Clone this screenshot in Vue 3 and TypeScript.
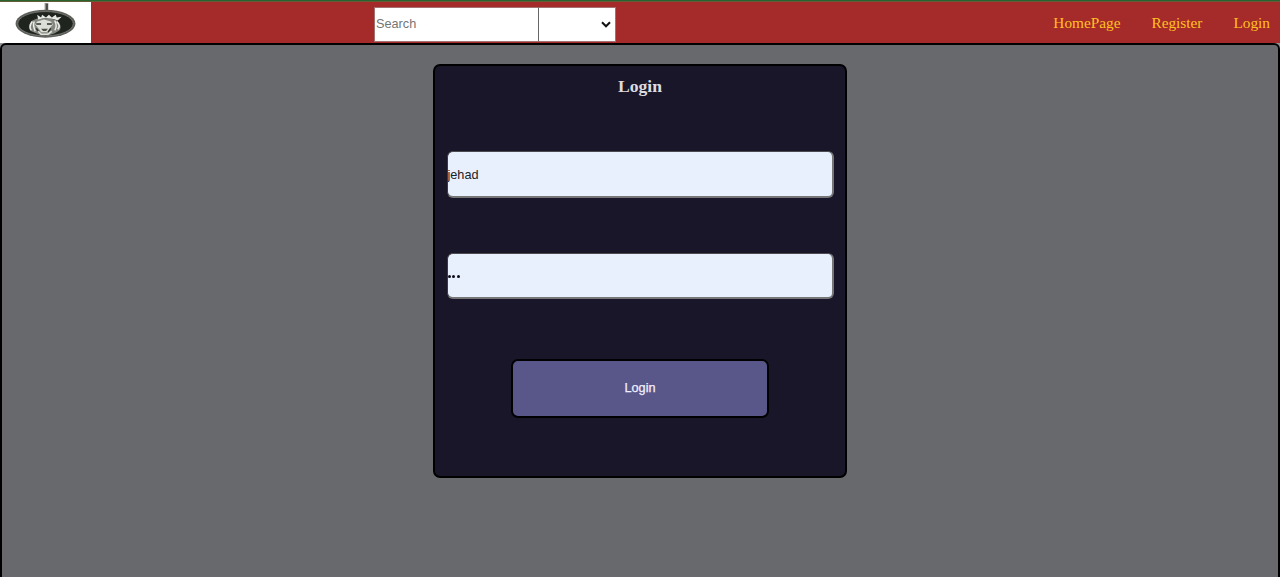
<script setup lang="ts">
import { ref } from 'vue'

const links: string[] = ['HomePage', 'Register', 'Login']
const search = ref('')
const username = ref('jehad')
</script>

<template>
  <div class="page">
    <header class="navbar">
      <div class="logo">
        <svg width="91" height="42" viewBox="0 0 91 42" aria-label="Logo">
          <path d="M46.5 1v10" stroke="#8b8d86" stroke-width="3.8" />
          <path d="M47 2v9" stroke="#3d403a" stroke-width="1.6" />
          <ellipse cx="45.5" cy="22.2" rx="30.7" ry="14.3" fill="#5d5f5a" />
          <ellipse cx="45.5" cy="22.2" rx="28.4" ry="12.4" fill="#20241f" stroke="#858882" stroke-width=".7" />
          <g class="lion">
            <path d="M32 19c-4 3-4 8-1 11l5 2 5 2h8l6-2 5-3c2-3 1-7-3-10l-6-2H37Z" fill="#83867f" />
            <path d="M32 20c-3 4-3 7-1 9m3-9c-2 4 0 7 1 10m20-11c2 4 2 7 0 10m2-9c3 3 3 6 1 8" fill="none" stroke="#eceee9" stroke-width="1.5" />
            <path d="m37 13 1 5c6-2 13-2 20 1l4-4-5 1-1-3-4 3-3-3-3 3-4-3-1 3Z" fill="#e7e9e4" />
            <path d="m37 20 7-2 7 2 2 3-4 5-1 3h-7l-2-3-4-5Z" fill="#dcdfd8" />
            <path d="M36 22.5h5m6 0h5M36 27l3 4m12-4-3 4" stroke="#2b3028" stroke-width="1.4" />
            <path d="M41 27.5h7l-2 2.2h-3Z" fill="#4a5046" />
            <path d="m38 30 3 3h7l4-3" fill="none" stroke="#dfe2db" stroke-width="1.7" />
          </g>
        </svg>
      </div>
      <form class="search" @submit.prevent>
        <input v-model="search" class="search-input" type="text" placeholder="Search" />
        <button class="category" type="button" aria-label="Category">
          <svg width="10" height="7" viewBox="0 0 10 7">
            <path d="m1 1.3 4 4 4-4" fill="none" stroke="#111" stroke-width="2" />
          </svg>
        </button>
      </form>
      <nav class="links">
        <a v-for="link in links" :key="link">{{ link }}</a>
      </nav>
    </header>
    <main class="content">
      <form class="card" @submit.prevent>
        <h1>Login</h1>
        <input v-model="username" class="field" type="text" aria-label="Username" />
        <div class="field password" aria-label="Password"><i v-for="n in 3" :key="n" /></div>
        <button class="submit" type="submit">Login</button>
      </form>
    </main>
  </div>
</template>

<style>
body { margin: 0; background: #929294; overflow: hidden; }
</style>

<style scoped>
* { box-sizing: border-box; }
.page {
  height: 577px;
  overflow: hidden;
  display: flex;
  flex-direction: column;
  font-family: "Liberation Serif", serif;
}
.navbar {
  flex: 0 0 43px;
  display: flex;
  border-top: 1px solid #27632e;
  background: linear-gradient(#655d38 0 1px, #a52a2a 1px);
}
.logo { width: 91px; height: 42px; padding-top: 1px; }
.logo svg { display: block; height: 41px; background: #fff; }
.lion { filter: blur(.35px); }
.search { display: flex; width: 242px; height: 35px; margin: 6px 0 0 283px; }
input, button { font-family: "Liberation Sans", Arial, sans-serif; font-size: 12.7px; outline: none; }
.search-input {
  width: 165px;
  height: 35px;
  padding: 0 1px 1px;
  border: 1px solid #767676;
  border-color: #a3716f #666 #a3716f #a3716f;
  background: #fff;
}
.search-input::placeholder { color: #757575; opacity: 1; }
.category {
  width: 77px;
  height: 35px;
  padding: 0 4px 1px 0;
  border: 1px solid #a3716f;
  border-left: 0;
  background: #fff;
  display: flex;
  align-items: center;
  justify-content: flex-end;
}
.links {
  margin-left: auto;
  padding: 12px 10px 0 0;
  display: flex;
  gap: 31px;
  color: #ffc020;
  font-size: 15.3px;
  line-height: 19px;
}
.content {
  flex: 0 0 550px;
  border: 2px solid #000;
  border-radius: 6px;
  padding-top: 19px;
  background: #68696d;
}
.card {
  width: 414px;
  height: 414px;
  margin: 0 auto;
  border: 2px solid #000;
  border-radius: 7px;
  background: #1a1629;
  display: flex;
  flex-direction: column;
  align-items: center;
}
h1 { margin: 10px 0 55px; color: #dcdce0; font-size: 17.6px; line-height: 20px; }
.field {
  flex: none;
  width: 387px;
  height: 47px;
  margin-bottom: 55px;
  padding: 1px 0 0;
  border: 2px solid;
  border-width: 1px 2px 2px 1px;
  border-color: #4b4b50 #767676 #767676 #3b3b3e;
  border-radius: 6px;
  background: #e8f0fe;
  color: #202124;
}
.password { display: flex; align-items: center; gap: 1.6px; height: 46px; margin-bottom: 60px; padding: 1px 0 0; }
.password i { width: 3px; height: 3px; border-radius: 50%; background: #0c0c16; }
.submit {
  width: 258px;
  height: 59px;
  padding: 0 0 1px;
  border: 2px solid #000;
  border-radius: 7px;
  background: #59568a;
  color: #f1f0fa;
  -webkit-text-stroke: .25px #f1f0fa;
}
</style>
